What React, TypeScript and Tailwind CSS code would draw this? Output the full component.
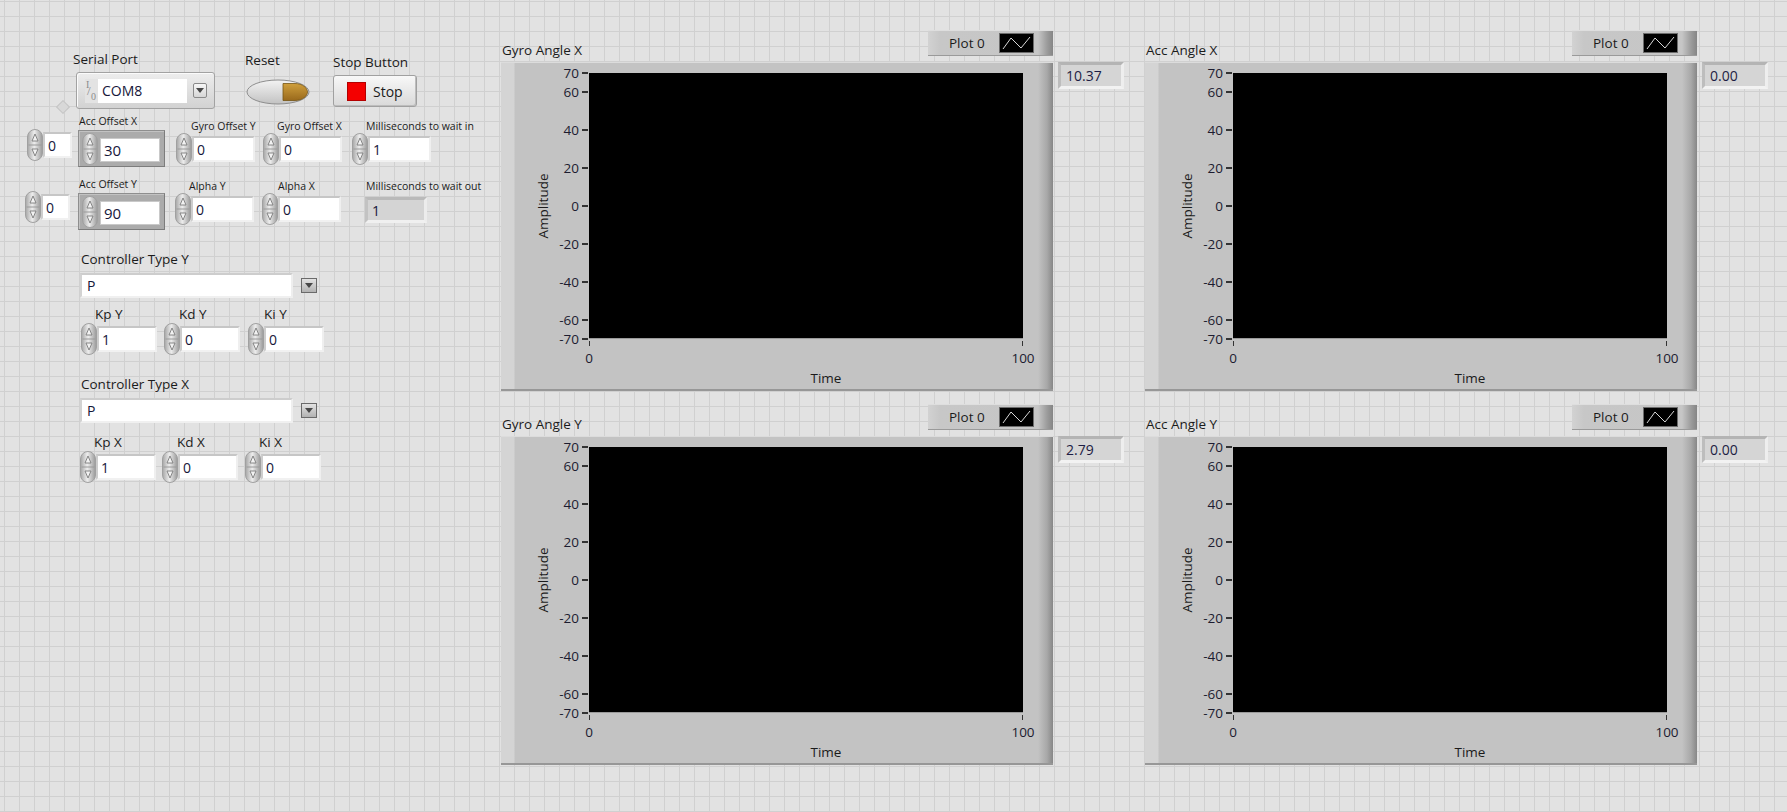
import React from 'react';

// ============================================================================
// Small building blocks
// ============================================================================

const Spinner = () => (
  <svg width="16" height="32" viewBox="0 0 16 32" className="shrink-0">
    <defs>
      <linearGradient id="spin" x1="0" x2="1" y1="0" y2="0">
        <stop offset="0" stopColor="#a6a6a6" />
        <stop offset="0.45" stopColor="#ededed" />
        <stop offset="1" stopColor="#999999" />
      </linearGradient>
    </defs>
    <rect x="0.5" y="0.5" width="15" height="31" rx="7.5" fill="url(#spin)" stroke="#a0a0a0" />
    <line x1="1.5" y1="16" x2="14.5" y2="16" stroke="#9a9a9a" />
    <path d="M8 5 L11 12 H5 Z" fill="#f2f2f2" stroke="#7a7a7a" strokeWidth="0.9" strokeLinejoin="round" />
    <path d="M8 27 L11 20 H5 Z" fill="#f2f2f2" stroke="#7a7a7a" strokeWidth="0.9" strokeLinejoin="round" />
  </svg>
);

const DownArrow = () => (
  <svg width="8" height="5" viewBox="0 0 8 5">
    <path d="M0 0 H8 L4 5 Z" fill="#474747" />
  </svg>
);

// white numeric entry with sunken bevel
const Field = ({ value, className = '' }: { value: string; className?: string }) => (
  <div
    className={`flex h-[26px] items-center border-2 border-t-[#c6c6c6] border-l-[#cdcdcd] border-r-[#efefef] border-b-[#f1f1f1] bg-white pl-[3px] text-[14px] text-[#16163a] ${className}`}
  >
    {value}
  </div>
);

interface NumProps {
  label?: string;
  value: string;
  className?: string;
  labelClass?: string;
  fieldClass?: string;
  big?: boolean;
}

// spinner + field, with an optional label above
const NumCtl = ({ label, value, className = '', labelClass = '', fieldClass = 'w-[63px]', big }: NumProps) => (
  <div className={`flex flex-col ${className}`}>
    {label && (
      <span
        className={`whitespace-nowrap ${big ? 'h-[18px] text-[13.5px] leading-[18px]' : 'h-[14px] text-[10.5px] leading-[14px]'} ${labelClass}`}
      >
        {label}
      </span>
    )}
    <div className="flex items-center">
      <Spinner />
      <Field value={value} className={fieldClass} />
    </div>
  </div>
);

// the darker framed numerics (Acc Offset X / Y)
const FramedNum = ({ label, value, className = '' }: { label: string; value: string; className?: string }) => (
  <div className={`flex w-[87px] flex-col ${className}`}>
    <span className="ml-[1px] h-[14px] whitespace-nowrap text-[10.5px] leading-[14px]">{label}</span>
    <div className="mt-[2px] flex h-[37px] w-[87px] items-center gap-[2px] border border-t-[#8e8e8e] border-l-[#8e8e8e] border-r-[#7c7c7c] border-b-[#7c7c7c] bg-[#ababab] pl-[3px] shadow-[inset_1px_1px_0_#c2c2c2]">
      <Spinner />
      <div className="mt-[3px] flex h-[24px] w-[60px] items-center border border-[#c9c9c9] bg-white pl-[3px] text-[15px] text-[#16163a]">
        {value}
      </div>
    </div>
  </div>
);

const Ring = ({ label, className = '' }: { label: string; className?: string }) => (
  <div className={`flex flex-col ${className}`}>
    <span className="ml-[81px] h-[18px] text-[13.5px] leading-[18px]">{label}</span>
    <div className="ml-[80px] mt-[5px] flex items-center">
      <div className="flex h-[25px] w-[213px] items-center border-2 border-t-[#cdcdcd] border-l-[#d3d3d3] border-r-[#eeeeee] border-b-[#f0f0f0] bg-white pl-[5px] text-[14px] text-[#16163a]">
        P
      </div>
      <div className="ml-[8px] flex h-[15px] w-[16px] items-center justify-center border border-[#6a6a6a] bg-[linear-gradient(#e2e2e2,#b2b2b2)]">
        <DownArrow />
      </div>
    </div>
  </div>
);

// ============================================================================
// Left control panel
// ============================================================================

const LeftPanel = () => (
  <div className="relative flex w-[501px] shrink-0 flex-col">
    {/* Row A: serial port, reset, stop */}
    <div className="flex items-start">
      <div className="ml-[73px] mt-[50px] flex flex-col">
        <span className="h-[18px] text-[13.5px] leading-[18px]">Serial Port</span>
        <div className="ml-[3px] mt-[4px] flex h-[37px] w-[139px] items-center rounded-[3px] border border-[#a2a2a2] bg-[linear-gradient(#ededed,#d2d2d2)] shadow-[inset_1px_1px_0_#fbfbfb]">
          <div className="relative ml-[8px] h-[24px] w-[13px] bg-[#e3e3e3] font-['Liberation_Serif',serif] text-[#8c8c8c]">
            <span className="absolute left-[1px] top-[0px] text-[10px] leading-[12px]">I</span>
            <span className="absolute left-[2px] top-[5px] text-[13px] leading-[14px]">/</span>
            <span className="absolute left-[6px] top-[12px] text-[10px] leading-[12px]">0</span>
          </div>
          <div className="flex h-[24px] w-[89px] items-center bg-white pl-[4px] text-[14px] text-[#16163a]">COM8</div>
          <div className="ml-[6px] flex h-[15px] w-[14px] items-center justify-center rounded-[2px] border border-[#8a8a8a] bg-[linear-gradient(#f7f7f7,#d6d6d6)]">
            <DownArrow />
          </div>
        </div>
      </div>

      <div className="ml-[30px] mt-[51px] flex flex-col">
        <span className="h-[18px] text-[13.5px] leading-[18px]">Reset</span>
        <svg width="64" height="26" viewBox="0 0 64 26" className="ml-[1px] mt-[10px]">
          <defs>
            <linearGradient id="rb" x1="0" y1="0" x2="0" y2="1">
              <stop offset="0" stopColor="#f3f3f3" />
              <stop offset="1" stopColor="#c2c2c2" />
            </linearGradient>
            <linearGradient id="rg" x1="0" y1="0" x2="0" y2="1">
              <stop offset="0" stopColor="#cf9f3c" />
              <stop offset="1" stopColor="#99691c" />
            </linearGradient>
          </defs>
          <ellipse cx="32" cy="13" rx="31" ry="12" fill="url(#rb)" stroke="#8e8e8e" />
          <path
            d="M37 4.5 H49 C56.5 4.5 61.5 9 61.5 13 C61.5 17 56.5 21.5 49 21.5 H37 Z"
            fill="url(#rg)"
            stroke="#765614"
            strokeWidth="0.8"
          />
        </svg>
      </div>

      <div className="ml-[23px] mt-[53px] flex flex-col">
        <span className="h-[18px] whitespace-nowrap text-[13.5px] leading-[18px]">Stop Button</span>
        <div className="mt-[4px] flex h-[32px] w-[84px] items-center rounded-[3px] border border-[#a0a0a0] bg-[linear-gradient(#f8f8f8,#d9d9d9)] shadow-[inset_-1px_-1px_0_#bdbdbd]">
          <div className="ml-[13px] h-[19px] w-[19px] border border-[#b40000] bg-[#f40000]" />
          <span className="ml-[7px] text-[14px]">Stop</span>
        </div>
      </div>
    </div>

    {/* panel marker */}
    <div className="absolute left-[58px] top-[102px] h-[10px] w-[10px] rotate-45 border border-[#c4c4c4] bg-[#d8d8d8]" />

    {/* Row B */}
    <div className="mt-[5px] flex items-start">
      <NumCtl value="0" className="ml-[27px] mt-[15px]" fieldClass="w-[29px]" />
      <FramedNum label="Acc Offset X" value="30" className="ml-[6px]" />
      <NumCtl label="Gyro Offset Y" value="0" className="ml-[11px] mt-[5px] w-[79px]" labelClass="ml-[15px]" />
      <NumCtl label="Gyro Offset X" value="0" className="ml-[8px] mt-[5px] w-[79px]" labelClass="ml-[14px]" />
      <NumCtl label="Milliseconds to wait in" value="1" className="ml-[10px] mt-[5px] w-[79px]" labelClass="ml-[14px]" />
    </div>

    {/* Row C */}
    <div className="mt-[10px] flex items-start">
      <NumCtl value="0" className="ml-[25px] mt-[14px]" fieldClass="w-[29px]" />
      <FramedNum label="Acc Offset Y" value="90" className="ml-[8px]" />
      <NumCtl label="Alpha Y" value="0" className="ml-[10px] mt-[2px] w-[79px]" labelClass="ml-[14px]" />
      <NumCtl label="Alpha X" value="0" className="ml-[8px] mt-[2px] w-[79px]" labelClass="ml-[16px]" />
      <div className="ml-[24px] mt-[2px] flex w-[62px] flex-col">
        <span className="ml-[1px] h-[14px] whitespace-nowrap text-[10.5px] leading-[14px]">Milliseconds to wait out</span>
        <div className="mt-[4px] flex h-[26px] w-[62px] items-center border-[3px] border-t-[#bababa] border-l-[#c2c2c2] border-r-[#ececec] border-b-[#f0f0f0] bg-[#d4d4d4] pl-[4px] text-[14px] text-[#16163a]">
          1
        </div>
      </div>
    </div>

    {/* Controller Y */}
    <Ring label="Controller Type Y" className="mt-[20px]" />
    <div className="mt-[7px] flex items-start">
      <NumCtl big label="Kp Y" value="1" className="ml-[81px] w-[76px]" labelClass="ml-[14px]" fieldClass="w-[60px]" />
      <NumCtl big label="Kd Y" value="0" className="ml-[7px] w-[76px]" labelClass="ml-[15px]" fieldClass="w-[60px]" />
      <NumCtl big label="Ki Y" value="0" className="ml-[8px] w-[76px]" labelClass="ml-[16px]" fieldClass="w-[60px]" />
    </div>

    {/* Controller X */}
    <Ring label="Controller Type X" className="mt-[20px]" />
    <div className="mt-[10px] flex items-start">
      <NumCtl big label="Kp X" value="1" className="ml-[80px] w-[76px]" labelClass="ml-[14px]" fieldClass="w-[60px]" />
      <NumCtl big label="Kd X" value="0" className="ml-[6px] w-[76px]" labelClass="ml-[15px]" fieldClass="w-[60px]" />
      <NumCtl big label="Ki X" value="0" className="ml-[7px] w-[76px]" labelClass="ml-[14px]" fieldClass="w-[60px]" />
    </div>
  </div>
);

// ============================================================================
// Waveform chart
// ============================================================================

const PLOT_H = 266;
const Y_TICKS = [70, 60, 40, 20, 0, -20, -40, -60, -70];

const Legend = () => (
  <div className="flex h-[26px] w-[125px] items-center border-t border-b border-t-[#dedede] border-b-[#9a9a9a] bg-[linear-gradient(to_right,#d2d2d2_0px,#c7c7c7_12px,#c6c6c6_110px,#9c9c9c_119px,#858585_125px)]">
    <span className="ml-[21px] text-[13.5px] leading-[18px]">Plot 0</span>
    <div className="ml-[14px] flex h-[20px] w-[35px] items-center justify-center border border-[#6c6c6c] bg-black">
      <svg width="29" height="14" viewBox="0 0 29 14">
        <polyline points="1,13 9,2 19,12 28,1" fill="none" stroke="#d8d8d8" strokeWidth="1" />
      </svg>
    </div>
  </div>
);

const Chart = ({ title, value }: { title: string; value: string }) => (
  <div className="flex flex-col">
    <div className="flex h-[32px] w-[552px] items-start justify-between">
      <span className="ml-[1px] mt-[11px] text-[13.5px] leading-[18px]">{title}</span>
      <Legend />
    </div>
    <div className="flex items-start">
      {/* frame */}
      <div className="h-[329px] w-[552px] border-t border-b-2 border-t-[#dcdcdc] border-b-[#979797] bg-[linear-gradient(to_right,#d4d4d4_0px,#d4d4d4_13px,#c3c3c3_14px,#c3c3c3_537px,#a8a8a8_546px,#878787_552px)]">
        <div className="flex pt-[10px]">
          <div className="relative h-[266px] w-[88px]">
            <span className="absolute left-[42px] top-[133px] -translate-x-1/2 -translate-y-1/2 -rotate-90 whitespace-nowrap text-[13.5px] leading-[18px]">
              Amplitude
            </span>
            {Y_TICKS.map((t) => (
              <div
                key={t}
                className="absolute right-[1px] flex h-[18px] items-center gap-[3px]"
                style={{ top: ((70 - t) / 140) * PLOT_H - 9 }}
              >
                <span className="text-[13.5px] leading-[18px] text-[#1c1c30]">{t}</span>
                <div className="h-[1.5px] w-[6px] bg-[#333]" />
              </div>
            ))}
          </div>
          <div className="h-[266px] w-[434px] border-b border-[#9a9a9a] bg-black" />
        </div>
        <div className="ml-[88px] flex w-[434px] flex-col">
          <div className="mt-[2px] flex h-[5px] justify-between">
            <div className="w-px bg-[#333]" />
            <div className="w-px bg-[#333]" />
          </div>
          <div className="mt-[3px] flex h-[18px] justify-between text-[13.5px] leading-[18px] text-[#1c1c30]">
            <span className="-translate-x-1/2">0</span>
            <span className="translate-x-1/2">100</span>
          </div>
          <div className="mt-[2px] w-[474px] text-center text-[13.5px] leading-[18px]">Time</div>
        </div>
      </div>
      {/* digital display */}
      <div className="ml-[5px] flex h-[27px] w-[66px] items-center border-[3px] border-t-[#b4b4b4] border-l-[#bdbdbd] border-r-[#eeeeee] border-b-[#f2f2f2] bg-[#d5d5d5] pl-[5px] text-[14px] text-[#1d1d44]">
        {value}
      </div>
    </div>
  </div>
);

// ============================================================================
// App
// ============================================================================

export default function App() {
  return (
    <div className="h-[812px] w-[1787px] overflow-hidden bg-[#e2e2e2] bg-[image:linear-gradient(to_right,#d0d0d0_1px,transparent_1px),linear-gradient(to_bottom,#d0d0d0_1px,transparent_1px)] bg-[size:15px_15px] bg-[position:4px_1px] font-['Open_Sans',sans-serif] text-[#1b1b1b]">
      <div className="flex">
        <LeftPanel />
        <div className="grid grid-cols-[623px_623px] gap-x-[21px] gap-y-[13px] pt-[30px]">
          <Chart title="Gyro Angle X" value="10.37" />
          <Chart title="Acc Angle X" value="0.00" />
          <Chart title="Gyro Angle Y" value="2.79" />
          <Chart title="Acc Angle Y" value="0.00" />
        </div>
      </div>
    </div>
  );
}
